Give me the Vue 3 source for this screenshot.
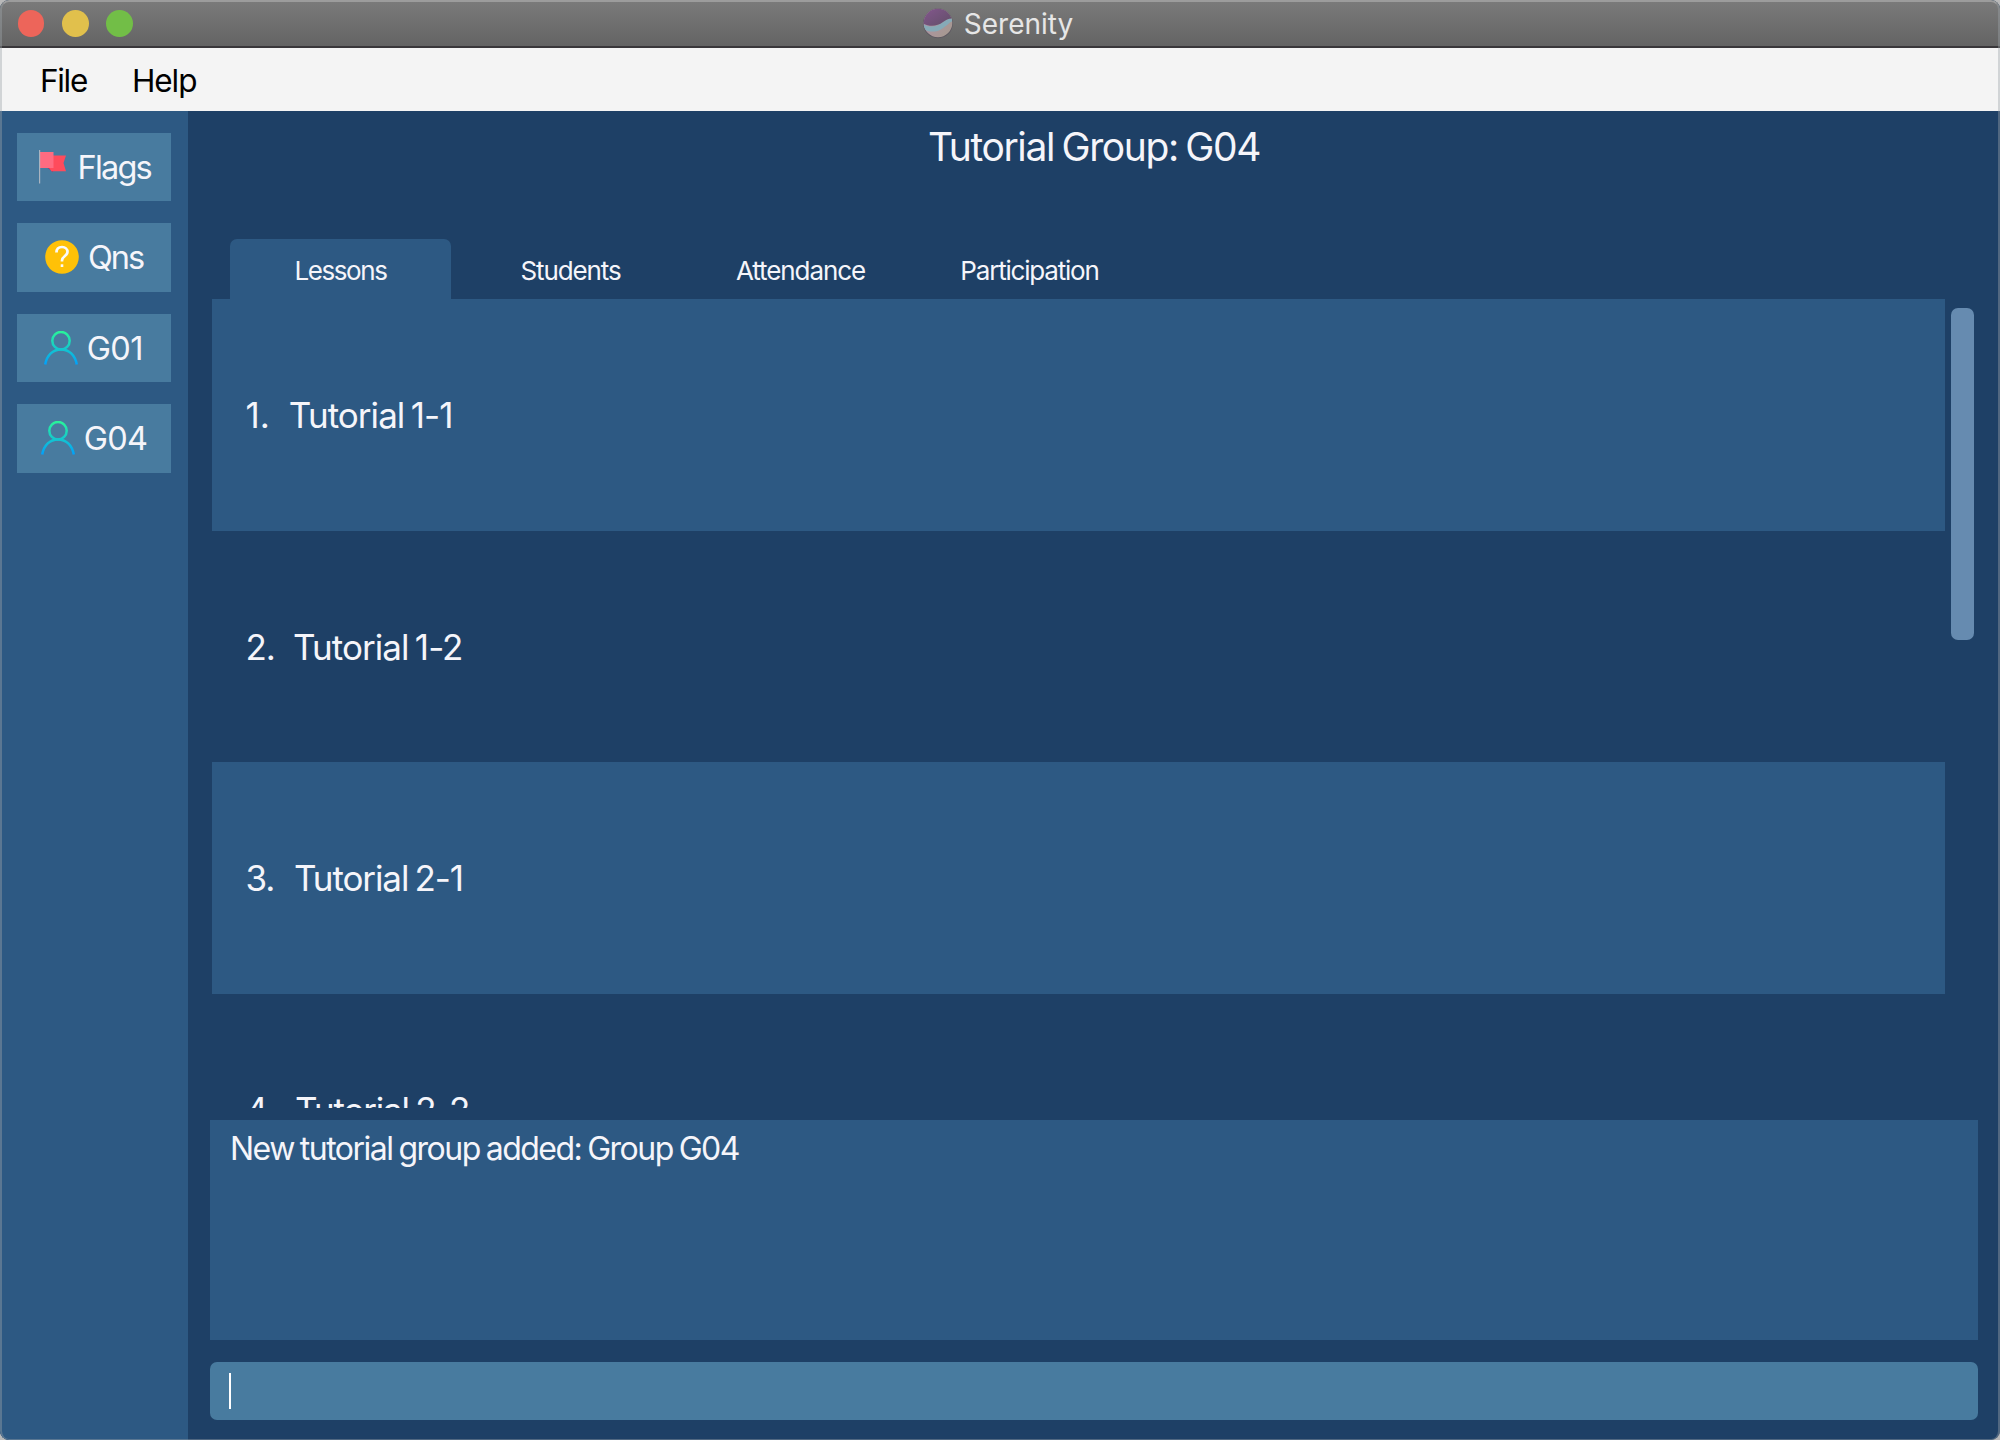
<script setup>
import { ref } from 'vue'

const menus = ref([
  { label: 'File', cls: 'file' },
  { label: 'Help', cls: 'help' },
])
const groups = ref(['G01', 'G04'])
const tabs = ref(['Lessons', 'Students', 'Attendance', 'Participation'])
const active = ref('Lessons')
const lessons = ref(['Tutorial 1-1', 'Tutorial 1-2', 'Tutorial 2-1', 'Tutorial 2-2'])
</script>

<template>
  <div class="window">
    <header class="titlebar">
      <div class="lights">
        <i class="light red"></i><i class="light yellow"></i><i class="light green"></i>
      </div>
      <div class="app-title">
        <svg class="logo" width="30" height="32" viewBox="0 0 30 32">
          <defs>
            <linearGradient id="lg-top" x1="0" y1="0" x2="1" y2="1">
              <stop offset="0" stop-color="#85578f" />
              <stop offset="1" stop-color="#604e66" />
            </linearGradient>
            <linearGradient id="lg-bottom" x1="0" y1="0" x2="1" y2="1">
              <stop offset="0" stop-color="#b291ae" />
              <stop offset="1" stop-color="#a49a8b" />
            </linearGradient>
            <clipPath id="ball"><circle cx="15" cy="16" r="14.3" /></clipPath>
          </defs>
          <circle cx="15" cy="16.4" r="14.8" fill="#5c5660" />
          <g clip-path="url(#ball)">
            <rect width="30" height="32" fill="url(#lg-bottom)" />
            <path d="M0 17C8 22 15 19 20 15C24 12 27 11 30 11V14C25 16 23 20 17 23C12 25.500 5 25 0 22Z" fill="#86aab7" />
            <path d="M0 0H30V11.500C26 11 23 13 20 15C14 19.500 7 20 0 16.500Z" fill="url(#lg-top)" />
          </g>
        </svg>
        <span>Serenity</span>
      </div>
    </header>

    <nav class="menubar">
      <span v-for="m in menus" :key="m.label" :class="m.cls">{{ m.label }}</span>
    </nav>

    <div class="body">
      <aside class="sidebar">
        <button class="side-btn flags">
          <svg width="28" height="34" viewBox="0 0 28 34">
            <path d="M9 18L14 22V17Z" fill="#c2185b" />
            <path d="M10 5.500H27L24.500 13L27 21.200H12.500L10 18Z" fill="#ff4b5c" />
            <rect x="1" y="2" width="13.500" height="16" fill="#ff6b81" />
            <rect x="0" y="0" width="1.200" height="33.500" fill="#a9b4c0" />
          </svg>
          <span>Flags</span>
        </button>
        <button class="side-btn qns">
          <svg width="34" height="34" viewBox="0 0 34 34">
            <circle cx="17" cy="17" r="16.800" fill="#ffc107" />
            <path d="M11.500 12.500C11.500 9 13.700 7 17 7C20.300 7 22.500 9 22.500 12C22.500 16 17 16 17 20.500V21.500" fill="none" stroke="#fafafa" stroke-width="2.700" />
            <rect x="15.700" y="24.300" width="2.600" height="2.700" fill="#fafafa" />
          </svg>
          <span>Qns</span>
        </button>
        <button v-for="g in groups" :key="g" class="side-btn" :class="g.toLowerCase()">
          <svg width="34" height="34" viewBox="0 0 34 34">
            <defs>
              <linearGradient :id="'person-' + g" gradientUnits="userSpaceOnUse" x1="0" y1="0" x2="0" y2="34">
                <stop offset="0" stop-color="#2af598" />
                <stop offset="1" stop-color="#009efd" />
              </linearGradient>
            </defs>
            <g fill="none" :stroke="`url(#person-${g})`" stroke-width="2.500">
              <circle cx="17" cy="9.700" r="8.700" />
              <path d="M1.200 33.500C3 24 9 18.400 17 18.400S31 24 32.800 33.500" />
            </g>
          </svg>
          <span>{{ g }}</span>
        </button>
      </aside>

      <main class="main">
        <h1 class="heading"><span>Tutorial Group: G04</span></h1>

        <div class="tabs">
          <div v-for="t in tabs" :key="t" class="tab" :class="[t.toLowerCase(), { active: t === active }]">
            <span>{{ t }}</span>
          </div>
        </div>

        <div class="list-wrap">
          <div class="list">
            <div v-for="(l, i) in lessons" :key="l" class="row" :class="'row-' + (i + 1)">
              <span class="num">{{ i + 1 }}.</span>
              <span class="name">{{ l }}</span>
            </div>
          </div>
          <div class="thumb"></div>
        </div>

        <section class="result"><span>New tutorial group added: Group G04</span></section>
        <div class="command"><i class="caret"></i></div>
      </main>
    </div>
  </div>
</template>

<style>
html,
body {
  margin: 0;
  background: #b9b9b9;
}
</style>

<style scoped>
.window {
  position: relative;
  width: 2000px;
  height: 1440px;
  box-sizing: border-box;
  display: flex;
  flex-direction: column;
  overflow: hidden;
  border-radius: 9px;
  background: #1e4066;
  color: #f5f5fa;
  font-family: Inter, "Liberation Sans", sans-serif;
}
.window::after {
  content: '';
  position: absolute;
  inset: 0;
  border: 2px solid rgba(160, 165, 170, 0.4);
  border-top-color: rgba(190, 190, 190, 0.5);
  border-radius: 9px;
  border-bottom-width: 1px;
}
.titlebar {
  position: relative;
  height: 48px;
  flex: none;
  box-sizing: border-box;
  border-bottom: 2px solid #39373a;
  background: linear-gradient(#7b7b7b, #646464);
  display: flex;
  align-items: center;
  justify-content: center;
}
.lights {
  position: absolute;
  left: 17.700px;
  top: 10px;
  display: flex;
  gap: 17.500px;
}
.light {
  width: 26.700px;
  height: 26.700px;
  border-radius: 50%;
}
.red { background: #ed655a; }
.yellow { background: #e1c04c; }
.green { background: #72be47; }
.app-title {
  display: flex;
  align-items: center;
  gap: 10.500px;
  font-size: 28px;
  line-height: 34px;
  color: #e6e6e6;
  padding: 0 3.500px 0 0;
}
.app-title span { padding-top: 2px; }
.menubar {
  height: 62.500px;
  flex: none;
  box-sizing: border-box;
  background: #f4f4f4;
  color: #000;
  display: flex;
  align-items: center;
  font-size: 31.500px;
  padding: 2px 0 0 40px;
  gap: 45px;
}
.file { letter-spacing: -1.300px; }
.help { letter-spacing: -1.100px; }
.body {
  flex: 1;
  min-height: 0;
  display: flex;
}
.sidebar {
  width: 188px;
  flex: none;
  box-sizing: border-box;
  background: #2d5983;
  padding: 22px 17px 0;
  display: flex;
  flex-direction: column;
  gap: 22px;
}
.side-btn {
  height: 68.500px;
  flex: none;
  border: 0;
  padding: 0;
  background: #487b9f;
  color: #f5f5fa;
  font: 32.500px Inter, "Liberation Sans", sans-serif;
  display: flex;
  align-items: center;
  justify-content: center;
  gap: 9px;
}
.side-btn span { padding-top: 1px; }
.flags { letter-spacing: -1.800px; padding-left: 2px; }
.flags svg { margin-right: 1.500px; }
.qns { letter-spacing: -2px; }
.g01 { letter-spacing: -0.700px; }
.g01 span { margin-right: 1.500px; }
.g04 { letter-spacing: -0.800px; }
.main {
  flex: 1;
  min-width: 0;
  display: flex;
  flex-direction: column;
  padding: 0 22px;
}
.heading {
  margin: 0;
  height: 128.500px;
  flex: none;
  box-sizing: border-box;
  padding-top: 12.400px;
  text-align: center;
  font-size: 39px;
  line-height: 48px;
  font-weight: 400;
  letter-spacing: -1.400px;
  word-spacing: -2px;
}
.tabs {
  display: flex;
  flex: none;
  gap: 9px;
  padding-left: 20px;
  height: 60px;
}
.tab {
  width: 221px;
  display: flex;
  align-items: center;
  justify-content: center;
  font-size: 26px;
  padding-top: 3px;
  box-sizing: border-box;
  border-radius: 7px 7px 0 0;
  letter-spacing: -1.100px;
}
.lessons { letter-spacing: -1.400px; }
.participation {
  letter-spacing: -1.200px;
  padding-right: 2px;
}
.tab.active { background: #2d5983; }
.list-wrap {
  height: 809px;
  flex: none;
  overflow: hidden;
  display: flex;
  gap: 6px;
  padding-left: 2px;
}
.list { width: 1733px; }
.row {
  height: 231.600px;
  display: flex;
  align-items: center;
  padding: 0.800px 0 0 33.500px;
  box-sizing: border-box;
  font-size: 35px;
  letter-spacing: -0.950px;
  word-spacing: -2.500px;
  white-space: pre;
}
.row:nth-child(odd) { background: #2d5983; }
.num {
  margin-right: 18px;
  letter-spacing: -1px;
}
.row-1 .num {
  margin-right: 19px;
  letter-spacing: 0;
}
.row-3 .num { margin-right: 19.500px; }
.row-4 .num { margin-right: 20px; }
.row-3 .name { letter-spacing: -1.100px; }
.row-4 .name { letter-spacing: -1.150px; }
.thumb {
  width: 23px;
  height: 332px;
  margin-top: 8.500px;
  border-radius: 7px;
  background: #668bb0;
}
.result {
  margin-top: 12px;
  height: 220px;
  flex: none;
  box-sizing: border-box;
  padding: 8.500px 20px;
  background: #2d5983;
  font-size: 32px;
  line-height: 40px;
  letter-spacing: -1.500px;
  word-spacing: -1.600px;
}
.command {
  margin-top: 22px;
  height: 58px;
  flex: none;
  box-sizing: border-box;
  border-radius: 7px;
  background: #487b9f;
  padding: 11px 18.500px;
}
.caret {
  display: block;
  width: 2.500px;
  height: 36px;
  background: #fff;
}
</style>
